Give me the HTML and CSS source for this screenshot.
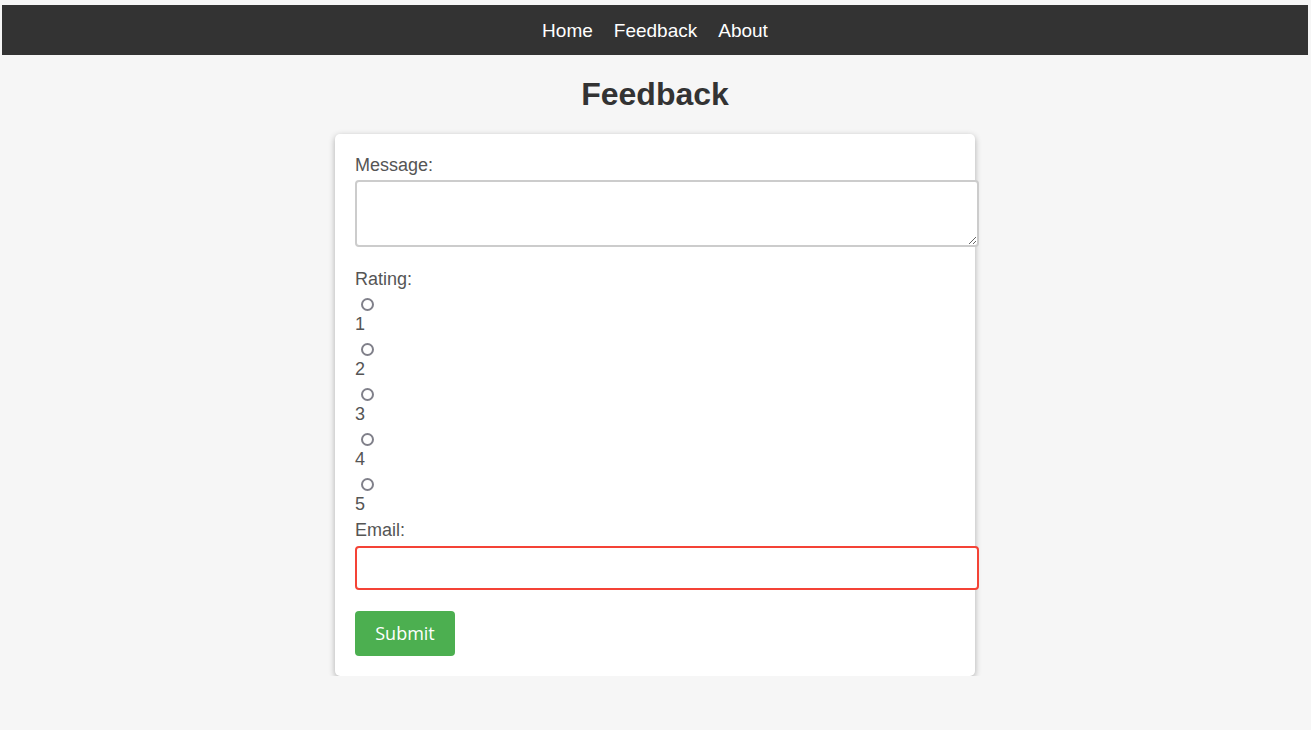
FILE: index.html
```html
<!DOCTYPE html>
<html lang="en">
<head>
<meta charset="utf-8">
<title>Feedback</title>
<link rel="stylesheet" href="styles.css">
</head>
<body>
<nav class="topnav">
  <a href="#" class="nav-link">Home</a>
  <a href="#" class="nav-link">Feedback</a>
  <a href="#" class="nav-link">About</a>
</nav>
<h1 class="page-title">Feedback</h1>
<form class="card">
  <label class="field-label" for="message">Message:</label>
  <textarea id="message" class="message-box"></textarea>
  <div class="rating-label">Rating:</div>
  <div class="rating-options">
    <div class="option"><input type="radio" name="rating" class="radio" id="r1"><label for="r1" class="option-text">1</label></div>
    <div class="option"><input type="radio" name="rating" class="radio" id="r2"><label for="r2" class="option-text">2</label></div>
    <div class="option"><input type="radio" name="rating" class="radio" id="r3"><label for="r3" class="option-text">3</label></div>
    <div class="option"><input type="radio" name="rating" class="radio" id="r4"><label for="r4" class="option-text">4</label></div>
    <div class="option"><input type="radio" name="rating" class="radio" id="r5"><label for="r5" class="option-text">5</label></div>
  </div>
  <label class="field-label email-label" for="email">Email:</label>
  <input type="email" id="email" class="email-box">
  <button type="button" class="submit-btn">Submit</button>
</form>
</body>
</html>
```

FILE: styles.css
```css
html, body {
  background: #f6f6f6;
}
body {
  margin: 5px 3px 0 2px;
  font-family: "Liberation Sans", Arial, sans-serif;
  font-size: 18px;
  color: #555;
}
.topnav {
  background: #333;
  height: 50px;
  display: flex;
  justify-content: center;
  align-items: center;
  gap: 21px;
}
.nav-link {
  color: #fff;
  text-decoration: none;
  font-size: 19px;
  line-height: 22px;
  padding-top: 1px;
}
.page-title {
  text-align: center;
  color: #333;
  font-size: 32px;
  margin: 21px 0;
  line-height: 37px;
}
.card {
  width: 600px;
  margin: 0 auto;
  padding: 20px;
  background: #fff;
  border-radius: 5px;
  box-shadow: 0 2px 6px rgba(0,0,0,0.3);
  display: flex;
  flex-direction: column;
  align-items: flex-start;
}
.field-label {
  display: block;
  line-height: 21px;
  margin-top: 1px;
  margin-bottom: 4px;
}
.message-box {
  display: block;
  width: 100%;
  height: 43px;
  padding: 10px;
  border: 2px solid #ccc;
  border-radius: 4px;
  margin: 0 0 22px 0;
  font-family: inherit;
  font-size: 16px;
  resize: vertical;
}
.rating-label {
  line-height: 21px;
}
.rating-options {
  display: flex;
  flex-direction: column;
}
.option {
  display: flex;
  flex-direction: column;
  align-items: flex-start;
}
.radio {
  appearance: none;
  -webkit-appearance: none;
  box-sizing: border-box;
  width: 13px;
  height: 13px;
  border: 2px solid #80808a;
  border-radius: 50%;
  background: #fff;
  margin: 8px 0 3px 6px;
}
.option-text {
  line-height: 21px;
}
.email-label {
  margin-top: 5px;
  margin-bottom: 5px;
}
.email-box {
  display: block;
  width: 100%;
  height: 20px;
  padding: 10px;
  border: 2px solid #f44336;
  border-radius: 4px;
  margin: 0 0 21px 0;
  font-family: inherit;
  font-size: 16px;
  outline: none;
}
.submit-btn {
  background: #4caf50;
  color: #fff;
  border: none;
  border-radius: 4px;
  width: 100px;
  height: 45px;
  padding: 0 0 2px 0;
  font-family: "Open Sans", sans-serif;
  font-size: 18px;
  cursor: pointer;
}
```
